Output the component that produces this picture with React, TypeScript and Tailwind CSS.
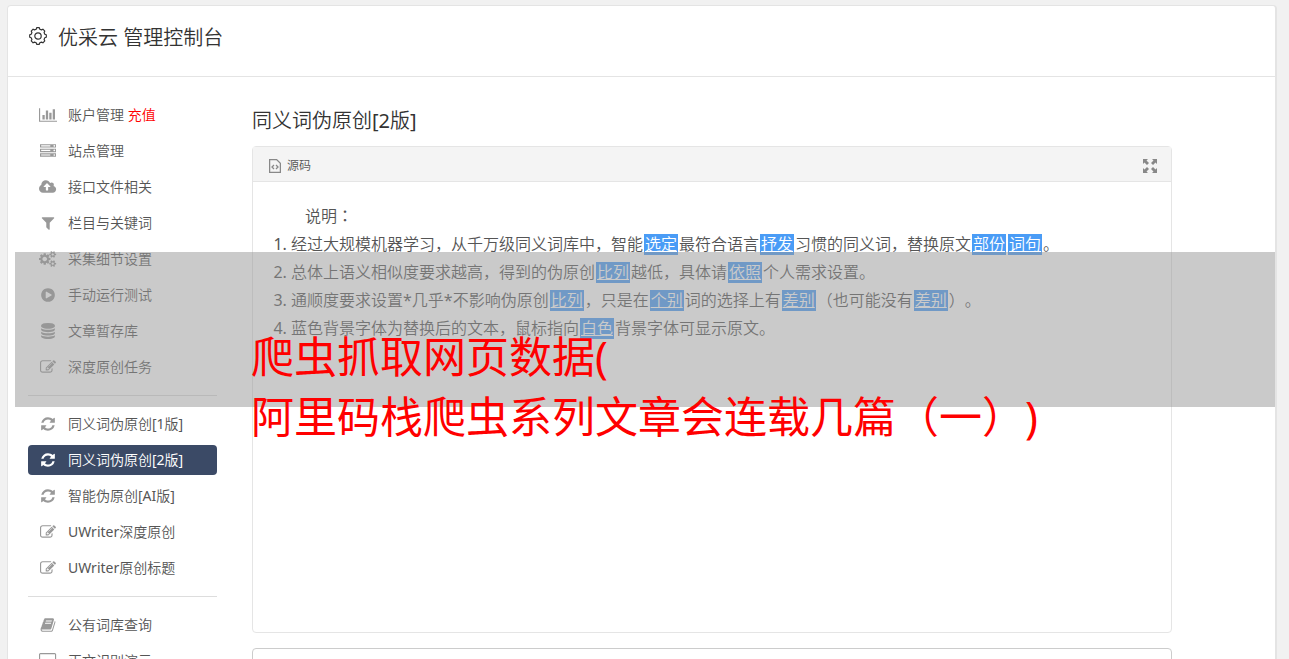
import React from 'react';
import clsx from 'clsx';

type IconName =
    | 'chart' | 'server' | 'upload' | 'filter' | 'cogs' | 'play'
    | 'database' | 'edit' | 'refresh' | 'book' | 'desktop';

interface NavItem {
    icon: IconName;
    label: string;
    extra?: string;
    active?: boolean;
}

const ICONS: Record<IconName, { w: number; d: string }> = {
    chart: { w: 2048, d: 'M640 896v512h-256v-512h256zm384-512v1024h-256v-1024h256zm1024 1152v128h-2048v-1536h128v1408h1920zm-640-896v768h-256v-768h256zm384-384v1152h-256v-1152h256z' },
    server: { w: 1792, d: 'M128 1408h1024v-128h-1024v128zm0-512h1024v-128h-1024v128zm1568 448q0-40-28-68t-68-28-68 28-28 68 28 68 68 28 68-28 28-68zm-1568-960h1024v-128h-1024v128zm1568 448q0-40-28-68t-68-28-68 28-28 68 28 68 68 28 68-28 28-68zm0-512q0-40-28-68t-68-28-68 28-28 68 28 68 68 28 68-28 28-68zm96 832v384h-1792v-384h1792zm0-512v384h-1792v-384h1792zm0-512v384h-1792v-384h1792z' },
    upload: { w: 1920, d: 'M1280 864q0-14-9-23l-352-352q-9-9-23-9t-23 9l-351 351q-10 12-10 24 0 14 9 23t23 9h224v352q0 13 9.5 22.5t22.5 9.5h192q13 0 22.5-9.5t9.5-22.5v-352h224q13 0 22.5-9.5t9.5-22.5zm640 288q0 159-112.5 271.5t-271.5 112.5h-1088q-185 0-316.5-131.5t-131.5-316.5q0-130 70-240t188-165q-2-30-2-43 0-212 150-362t362-150q156 0 285.5 87t188.5 231q71-62 166-62 106 0 181 75t75 181q0 76-41 138 130 31 213.5 135.5t83.5 238.5z' },
    filter: { w: 1792, d: 'M1595 295q17 41-14 70l-493 493v742q0 42-39 59-13 5-25 5-27 0-45-19l-256-256q-19-19-19-45v-486l-493-493q-31-29-14-70 17-39 59-39h1280q42 0 59 39z' },
    cogs: { w: 1920, d: 'M896 896q0-106-75-181t-181-75-181 75-75 181 75 181 181 75 181-75 75-181zm768 512q0-52-38-90t-90-38-90 38-38 90q0 53 37.5 90.5t90.5 37.5 90.5-37.5 37.5-90.5zm0-1024q0-52-38-90t-90-38-90 38-38 90q0 53 37.5 90.5t90.5 37.5 90.5-37.5 37.5-90.5zm-384 421v185q0 10-7 19.5t-16 10.5l-155 24q-11 35-32 76 34 48 90 115 7 11 7 20 0 12-7 19-23 30-82.5 89.5t-78.5 59.5q-11 0-21-7l-115-90q-37 19-77 31-11 108-23 155-7 24-30 24h-186q-11 0-20-7.5t-10-17.5l-23-153q-34-10-75-31l-118 89q-7 7-20 7-11 0-21-8-144-133-144-160 0-9 7-19 10-14 41-53t47-61q-23-44-35-82l-152-24q-10-1-17-9.5t-7-19.5v-185q0-10 7-19.5t16-10.5l155-24q11-35 32-76-34-48-90-115-7-11-7-20 0-12 7-20 22-30 82-89t79-59q11 0 21 7l115 90q34-18 77-32 11-108 23-154 7-24 30-24h186q11 0 20 7.5t10 17.5l23 153q34 10 75 31l118-89q8-7 20-7 11 0 21 8 144 133 144 160 0 8-7 19-12 16-42 54t-45 60q23 48 34 82l152 23q10 2 17 10.5t7 19.5zm640 533v140q0 16-149 31-12 27-30 52 51 113 51 138 0 4-4 7-122 71-124 71-8 0-46-47t-52-68q-20 2-30 2t-30-2q-14 21-52 68t-46 47q-2 0-124-71-4-3-4-7 0-25 51-138-18-25-30-52-149-15-149-31v-140q0-16 149-31 13-29 30-52-51-113-51-138 0-4 4-7 4-2 35-20t59-34 30-16q8 0 46 46.5t52 67.5q20-2 30-2t30 2q51-71 92-112l6-2q4 0 124 70 4 3 4 7 0 25-51 138 17 23 30 52 149 15 149 31zm0-1024v140q0 16-149 31-12 27-30 52 51 113 51 138 0 4-4 7-122 71-124 71-8 0-46-47t-52-68q-20 2-30 2t-30-2q-14 21-52 68t-46 47q-2 0-124-71-4-3-4-7 0-25 51-138-18-25-30-52-149-15-149-31v-140q0-16 149-31 13-29 30-52-51-113-51-138 0-4 4-7 4-2 35-20t59-34 30-16q8 0 46 46.5t52 67.5q20-2 30-2t30 2q51-71 92-112l6-2q4 0 124 70 4 3 4 7 0 25-51 138 17 23 30 52 149 15 149 31z' },
    play: { w: 1792, d: 'M896 128q209 0 385.5 103t279.5 279.5 103 385.5-103 385.5-279.5 279.5-385.5 103-385.5-103-279.5-279.5-103-385.5 103-385.5 279.5-279.5 385.5-103zm384 823q32-18 32-55t-32-55l-544-320q-31-19-64-1-32 19-32 56v640q0 37 32 56 16 8 32 8 17 0 32-9z' },
    database: { w: 1792, d: 'M896 768q237 0 443-43t325-127v170q0 69-103 128t-280 93.5-385 34.5-385-34.5-280-93.5-103-128v-170q119 84 325 127t443 43zm0 768q237 0 443-43t325-127v170q0 69-103 128t-280 93.5-385 34.5-385-34.5-280-93.5-103-128v-170q119 84 325 127t443 43zm0-384q237 0 443-43t325-127v170q0 69-103 128t-280 93.5-385 34.5-385-34.5-280-93.5-103-128v-170q119 84 325 127t443 43zm0-1152q208 0 385 34.5t280 93.5 103 128v128q0 69-103 128t-280 93.5-385 34.5-385-34.5-280-93.5-103-128v-128q0-69 103-128t280-93.5 385-34.5z' },
    edit: { w: 1792, d: 'M888 1184l116-116-152-152-116 116v56h96v96h56zm440-720q-16-16-33 1l-350 350q-17 17-1 33t33-1l350-350q17-17 1-33zm80 594v190q0 119-84.5 203.5t-203.5 84.5h-832q-119 0-203.5-84.5t-84.5-203.5v-832q0-119 84.5-203.5t203.5-84.5h832q63 0 117 25 15 7 18 23 3 17-9 29l-49 49q-14 14-32 8-23-6-45-6h-832q-66 0-113 47t-47 113v832q0 66 47 113t113 47h832q66 0 113-47t47-113v-126q0-13 9-22l64-64q15-15 35-7t20 29zm-96-738l288 288-672 672h-288v-288zm444 132l-92 92-288-288 92-92q28-28 68-28t68 28l152 152q28 28 28 68t-28 68z' },
    refresh: { w: 1792, d: 'M1639 1056q0 5-1 7-64 268-268 434.5t-478 166.5q-146 0-282.5-55t-243.5-157l-129 129q-19 19-45 19t-45-19-19-45v-448q0-26 19-45t45-19h448q26 0 45 19t19 45-19 45l-137 137q71 66 161 102t187 36q134 0 250-65t186-179q11-17 53-117 8-23 30-23h192q13 0 22.5 9.5t9.5 22.5zm25-800v448q0 26-19 45t-45 19h-448q-26 0-45-19t-19-45 19-45l138-138q-148-137-349-137-134 0-250 65t-186 179q-11 17-53 117-8 23-30 23h-199q-13 0-22.5-9.5t-9.5-22.5v-7q65-268 270-434.5t480-166.5q146 0 284 55.5t245 156.5l130-129q19-19 45-19t45 19 19 45z' },
    book: { w: 1792, d: 'M1703 478q40 57 18 129l-275 906q-19 64-76.5 107.5t-122.5 43.5h-923q-77 0-148.5-53.5t-99.5-131.5q-24-67-2-127 0-4 3-27t4-37q1-8-3-21.5t-3-19.5q2-11 8-21t16.5-23.5 16.5-23.5q23-38 45-91.5t30-91.5q3-10 .5-30t-.5-28q3-11 17-28t17-23q21-36 42-92t25-90q1-9-2.5-32t.5-28q4-13 22-30.5t22-22.5q19-26 42.5-84.5t27.5-96.5q1-8-3-25.5t-2-26.5q2-8 9-18t18-23 17-21q8-12 16.5-30.5t15-35 16-36 19.5-32 26.5-23.5 36-11.5 47.5 5.5l-1 3q38-9 51-9h761q74 0 114 56t18 130l-274 906q-36 119-71.5 153.5t-128.5 34.5h-869q-27 0-38 15-11 16-1 43 24 70 144 70h923q29 0 56-15.5t35-41.5l300-987q7-22 5-57 38 15 59 43zm-1064 2q-4 13 2 22.5t20 9.5h608q13 0 25.5-9.5t16.5-22.5l21-64q4-13-2-22.5t-20-9.5h-608q-13 0-25.5 9.5t-16.5 22.5zm-83 256q-4 13 2 22.5t20 9.5h608q13 0 25.5-9.5t16.5-22.5l21-64q4-13-2-22.5t-20-9.5h-608q-13 0-25.5 9.5t-16.5 22.5z' },
    desktop: { w: 1920, d: 'M1792 992v-832q0-13-9.5-22.5t-22.5-9.5h-1600q-13 0-22.5 9.5t-9.5 22.5v832q0 13 9.5 22.5t22.5 9.5h1600q13 0 22.5-9.5t9.5-22.5zm128-832v1088q0 66-47 113t-113 47h-544q0 37 16 77.5t32 71 16 43.5q0 26-19 45t-45 19h-512q-26 0-45-19t-19-45q0-14 16-44t32-70 16-78h-544q-66 0-113-47t-47-113v-1088q0-66 47-113t113-47h1600q66 0 113 47t47 113z' },
};

const NAV: NavItem[][] = [
    [
        { icon: 'chart', label: '账户管理', extra: '充值' },
        { icon: 'server', label: '站点管理' },
        { icon: 'upload', label: '接口文件相关' },
        { icon: 'filter', label: '栏目与关键词' },
        { icon: 'cogs', label: '采集细节设置' },
        { icon: 'play', label: '手动运行测试' },
        { icon: 'database', label: '文章暂存库' },
        { icon: 'edit', label: '深度原创任务' },
    ],
    [
        { icon: 'refresh', label: '同义词伪原创[1版]' },
        { icon: 'refresh', label: '同义词伪原创[2版]', active: true },
        { icon: 'refresh', label: '智能伪原创[AI版]' },
        { icon: 'edit', label: 'UWriter深度原创' },
        { icon: 'edit', label: 'UWriter原创标题' },
    ],
    [
        { icon: 'book', label: '公有词库查询' },
        { icon: 'desktop', label: '正文识别演示' },
    ],
];

function Icon({ name }: { name: IconName }) {
    const { w, d } = ICONS[name];
    return (
        <svg viewBox={`0 0 ${w} 1792`} className="h-4 w-auto" fill="currentColor" aria-hidden="true">
            <path d={d} />
        </svg>
    );
}

function GearIcon() {
    return (
        <svg viewBox="0 0 20 20" className="mb-1 size-5" fill="none" stroke="currentColor" strokeWidth="1.2" aria-hidden="true">
            <path
                strokeLinejoin="round"
                d="M8.2 3.2 8.7 1.7h2.6l.5 1.5 1.7.7 1.4-.7 1.9 1.9-.7 1.4.7 1.7 1.5.5v2.6l-1.5.5-.7 1.7.7 1.4-1.9 1.9-1.4-.7-1.7.7-.5 1.5H8.7l-.5-1.5-1.7-.7-1.4.7-1.9-1.9.7-1.4-.7-1.7-1.5-.5V8.7l1.5-.5.7-1.7-.7-1.4 1.9-1.9 1.4.7z"
            />
            <circle cx="10" cy="10" r="3.2" />
        </svg>
    );
}

function SourceIcon() {
    return (
        <svg viewBox="0 0 12 14" className="h-[14px] w-3" fill="none" stroke="currentColor" strokeWidth="1.3" aria-hidden="true">
            <path d="M.6.6h7l3.800 3.800v9H.6z" />
            <path d="M5 6 3 8l2 2M7 6l2 2-2 2" />
        </svg>
    );
}

function ExpandIcon() {
    return (
        <svg viewBox="0 0 14 14" className="size-[14px]" fill="currentColor" aria-hidden="true">
            <path d="M0 0h5L3.5 1.5 6 4 4 6 1.5 3.5 0 5zM14 0v5l-1.5-1.5L10 6 8 4l2.5-2.5L9 0zM0 14V9l1.5 1.5L4 8l2 2-2.5 2.5L5 14zM14 14H9l1.5-1.5L8 10l2-2 2.5 2.5L14 9z" />
        </svg>
    );
}

// replaced synonym
function Word({ children }: { children: React.ReactNode }) {
    return (
        <a href="#" className="mx-px inline-block h-[21px] bg-[#4a9cf6] px-px leading-[21px] text-white underline">
            {children}
        </a>
    );
}

export default function App() {
    return (
        <div
            lang="zh-CN"
            className="relative h-screen overflow-hidden bg-[#f1f1f1] pt-[5px] pr-3 pl-[7px] font-['Noto_Sans','Noto_Sans_CJK_SC_DemiLight','Noto_Sans_CJK_SC',sans-serif] text-[#555] [text-spacing-trim:space-all]"
        >
            <div className="rounded border border-r-2 border-[#e4e4e4] bg-white">
                <header className="flex items-center gap-[10px] border-b border-[#e4e4e4] px-5 pt-[17px] pb-[23px] text-[#333]">
                    <GearIcon />
                    <h1 className="text-xl leading-[30px]">优采云 管理控制台</h1>
                </header>

                <div className="flex">
                    <nav className="w-[209px] shrink-0 pt-[23px] pl-5">
                        {NAV.map((group, gIdx) => (
                            <React.Fragment key={gIdx}>
                                {gIdx > 0 && <hr className="my-[13px] border-[#ddd]" />}
                                <ul className="flex flex-col gap-[6px]">
                                    {group.map((item) => (
                                        <li key={item.label}>
                                            <a
                                                href="#"
                                                className={clsx(
                                                    'flex h-[30px] items-center gap-[10px] rounded px-[10px] text-sm',
                                                    item.active && 'bg-[#3b4a66] text-white'
                                                )}
                                            >
                                                <span className={clsx('flex w-5 justify-center', !item.active && 'text-[#999]')}>
                                                    <Icon name={item.icon} />
                                                </span>
                                                <span>
                                                    {item.label}
                                                    {item.extra && <span className="text-[#f00]"> {item.extra}</span>}
                                                </span>
                                            </a>
                                        </li>
                                    ))}
                                </ul>
                            </React.Fragment>
                        ))}
                    </nav>

                    <main className="min-w-0 flex-1 pt-[29px] pr-[103px] pl-[35px]">
                        <h2 className="mb-[10px] text-xl leading-[30px] text-[#333]">同义词伪原创[2版]</h2>

                        <section className="rounded border border-[#e5e5e5]">
                            <div className="flex h-[35px] items-center justify-between border-b border-[#e5e5e5] bg-[#f4f4f4] pt-[3px] pr-[14px] pl-4">
                                <button type="button" className="flex items-center gap-[6px] text-xs">
                                    <span className="text-[#888]"><SourceIcon /></span>
                                    源码
                                </button>
                                <button type="button" aria-label="全屏" className="text-[#888]">
                                    <ExpandIcon />
                                </button>
                            </div>
                            <div className="min-h-[450px] px-5 pt-5 text-base leading-7">
                                <p className="indent-8">
                                    说明
                                    <span lang="zh-TW" className="font-['Noto_Sans_CJK_TC',sans-serif] leading-none">：</span>
                                </p>
                                <ol className="list-decimal pl-[18px]">
                                    <li>
                                        经过大规模机器学习，从千万级同义词库中，智能<Word>选定</Word>最符合语言<Word>抒发</Word>习惯的同义词，替换原文<Word>部份</Word><Word>词句</Word>。
                                    </li>
                                    <li>
                                        总体上语义相似度要求越高，得到的伪原创<Word>比列</Word>越低，具体请<Word>依照</Word>个人需求设置。
                                    </li>
                                    <li>
                                        通顺度要求设置*几乎*不影响伪原创<Word>比列</Word>，只是在<Word>个别</Word>词的选择上有<Word>差别</Word>（也可能没有<Word>差别</Word>）。
                                    </li>
                                    <li>
                                        蓝色背景字体为替换后的文本，鼠标指向<Word>白色</Word>背景字体可显示原文。
                                    </li>
                                </ol>
                            </div>
                        </section>

                        <textarea aria-label="原文" className="mt-[15px] block h-24 w-full resize-none rounded border border-[#ccc]" />
                    </main>
                </div>
            </div>

            {/* caption band */}
            <div className="pointer-events-none absolute top-[252px] right-[14px] left-[15px] h-[155px] bg-[#969696]/50 pt-[75px] pl-[236px] font-['Noto_Sans','Noto_Sans_CJK_SC',sans-serif] text-[43px] leading-[60px] whitespace-nowrap text-[#f00]">
                <p>爬虫抓取网页数据(</p>
                <p>阿里码栈爬虫系列文章会连载几篇（一）)</p>
            </div>
        </div>
    );
}
